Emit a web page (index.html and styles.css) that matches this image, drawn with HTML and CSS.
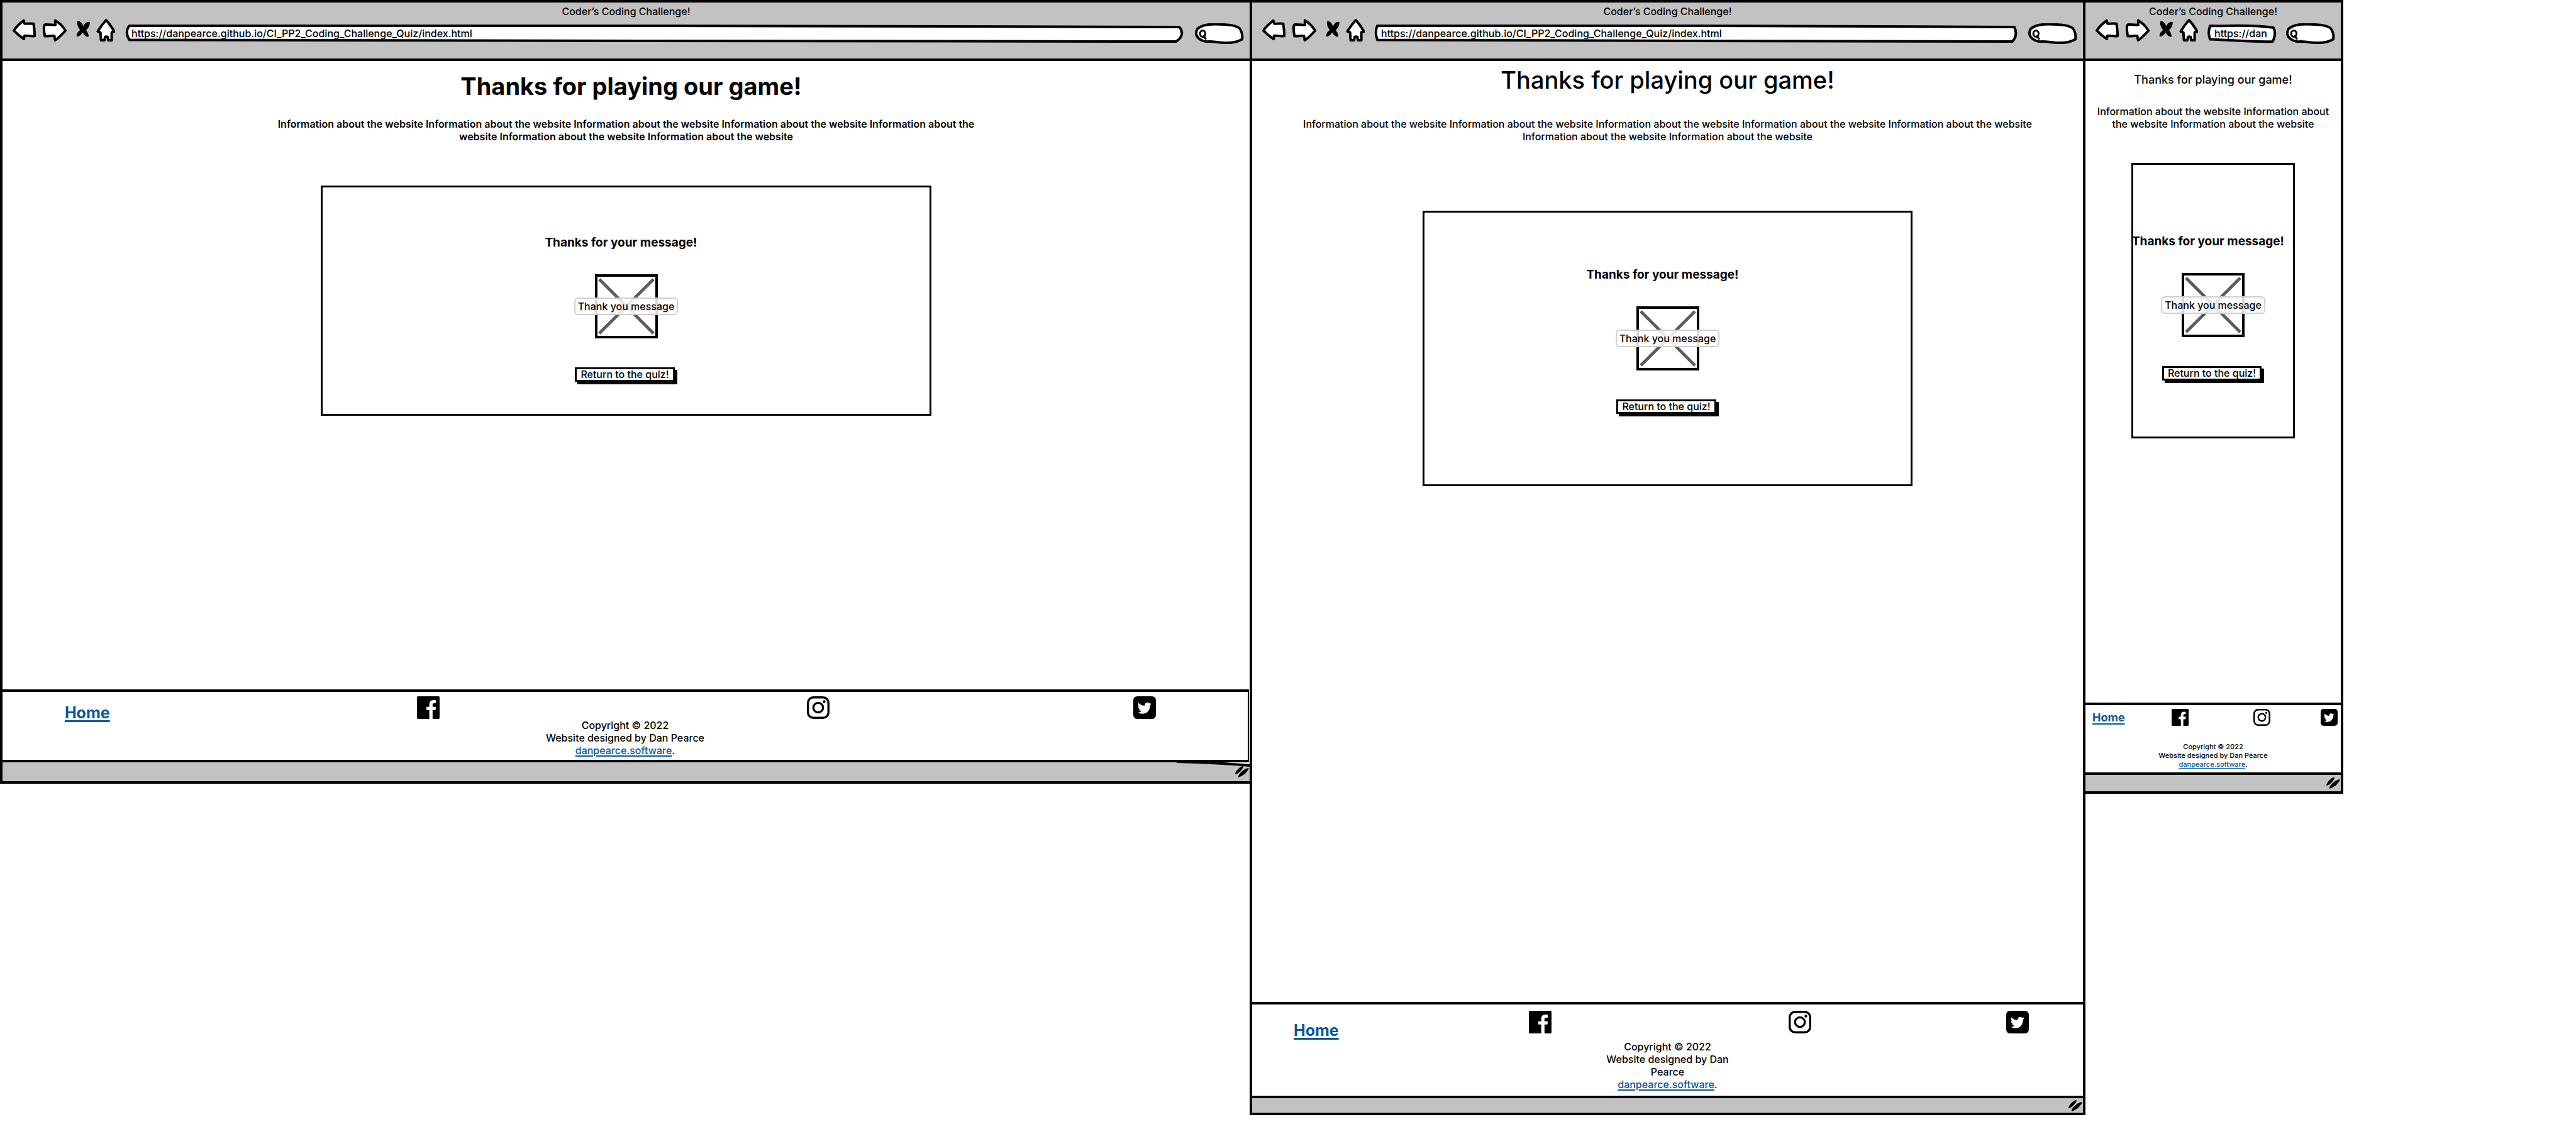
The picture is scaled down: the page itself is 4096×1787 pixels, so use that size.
FILE: index.html
```
<!DOCTYPE html>
<html lang="en">
<head>
<meta charset="utf-8">
<title>Coder's Coding Challenge!</title>
<link rel="stylesheet" href="styles.css">
</head>
<body>
<svg class="defs" width="0" height="0" aria-hidden="true">
  <symbol id="back" viewBox="0 0 38 40"><path class="ink" d="M3 18.7C7 12 13 7 18.700 2.700L20 7.500C25 8 31 7 34.500 7.800C35 14 36.500 21 36 27.300C31 28 25 26.500 20 26.800L19 32C13 28 7 23 3 18.700Z"/></symbol>
  <symbol id="forward" viewBox="0 0 40 40"><path class="ink" d="M20.800 2.500L21 9.600C15 10 10 8.500 5 9C2 10 2.500 17 4.300 27.400C9 28 14 26.500 19.400 27.100L20.600 34C27 30 32 24 37.200 18.700C33 12 27 6 20.800 2.500Z"/></symbol>
  <symbol id="stop" viewBox="0 0 26 40"><path d="M6.200 3.500C11 3 14 7 15.500 12C17.500 7 21 4 25.600 5C26.500 10 23.500 14.500 20 18C22.500 21.500 24.500 25 23.600 28.400C19 29 16.500 25 14.600 21.500C12 25 9 28.500 4.800 28C4.500 23 7.500 20 10.500 17.500C7 13.500 5 9 6.200 3.500Z"/></symbol>
  <symbol id="house" viewBox="0 0 30 40"><path class="ink" d="M15.700 2C11 7 6 14 2.500 19.800L6.700 21.500L7.600 34L13 34L14 28.800Q16 27.500 18.300 28.800L19.200 34L24.600 34L24.600 21.500L29 20.200C25 14 20 6 15.700 2Z"/></symbol>
  <symbol id="grip" viewBox="0 0 22 18"><path d="M11 0C14 0 13 3 10 6C7 10 3 13 0 13C0 9 5 3 11 0ZM21 3C23 4 19 8 16 12C12 15 8 17 5 18C4 13 14 4 21 3Z"/></symbol>
  <symbol id="facebook" viewBox="0 0 42 42"><path d="M2 0H40Q42 0 42 2V40Q42 42 40 42H29V25.500H34.500L35.300 19.500H29V15.500Q29 12.700 31.800 12.700H35V7.300Q33 7 30.800 7Q23 7 22.900 15V19.500H17.500V25.500H22.900V42H2Q0 42 0 40V2Q0 0 2 0Z"/></symbol>
  <symbol id="instagram" viewBox="0 0 42 42"><rect x="2" y="2" width="38" height="38" rx="10" fill="none" stroke="#000" stroke-width="4"/><circle cx="21" cy="21" r="9" fill="none" stroke="#000" stroke-width="3.800"/><circle cx="32" cy="10" r="2.600"/></symbol>
  <symbol id="twitter" viewBox="0 0 42 42"><path fill-rule="evenodd" d="M8 0H34Q42 0 42 8V34Q42 42 34 42H8Q0 42 0 34V8Q0 0 8 0ZM33.500 13.700L30.900 14.400Q32 13.600 32.900 12.100L29.800 13.200Q28.200 11.400 26 11.400Q21 11.800 21 17.500Q14 17 9.800 12.200Q7.500 16 11 19.200L8.700 18.600Q8.800 22.500 12.800 23.900L10.500 24Q11.500 27 15.500 27.600Q12.500 30 8.500 30Q12.500 32.700 16.800 32.500Q30.500 31.500 31.200 16.500Q32.600 15.400 33.500 13.700Z"/></symbol>
  <symbol id="lens" viewBox="0 0 80 34"><path class="ink" d="M3.800 9C12 1 28 1 40 1.800C54 2 66 4 71 8C75 14 76 20 75 25.500C67 30 58 31.500 48 31C38 31 28 28 19 29.200C8 28 1 21 2 15Q2.500 11 3.800 9Z"/><ellipse class="ink glass" cx="12.300" cy="16.500" rx="4.200" ry="5"/><path class="ink glass" d="M14 20.500L17 24.500"/></symbol>
</svg>

<main class="board">
  <article class="window desktop">
    <header class="chrome">
      <p class="caption">Coder’s Coding Challenge!</p>
      <div class="toolbar">
        <div class="buttons">
          <button type="button" aria-label="Back"><svg width="38" height="40"><use href="#back"/></svg></button>
          <button type="button" aria-label="Forward"><svg width="40" height="40"><use href="#forward"/></svg></button>
          <button type="button" aria-label="Stop"><svg width="26" height="40"><use href="#stop"/></svg></button>
          <button type="button" aria-label="Home page"><svg width="30" height="40"><use href="#house"/></svg></button>
        </div>
        <div class="address"><svg viewBox="0 0 100 28" preserveAspectRatio="none" aria-hidden="true"><path class="ink" d="M.4 2C30 1 70 2 99.600 4C100 12 99.900 20 99.300 27C70 27 30 25 .4 24.500C.1 16 .1 8 .4 2Z"/></svg><input type="text" aria-label="Address" value="https://danpearce.github.io/CI_PP2_Coding_Challenge_Quiz/index.html"></div>
        <div class="search"><svg width="80" height="34" aria-hidden="true"><use href="#lens"/></svg><input type="search" aria-label="Search"></div>
      </div>
    </header>
    <section class="page">
      <h1>Thanks for playing our game!</h1>
      <p class="intro">Information about the website Information about the website Information about the website Information about the website Information about the website Information about the website Information about the website</p>
      <div class="card">
        <h2>Thanks for your message!</h2>
        <figure class="picture"><svg viewBox="0 0 94 96" aria-hidden="true"><path d="M3 4L91 92M91 4L3 92"/></svg><figcaption>Thank you message</figcaption></figure>
        <button type="button" class="return">Return to the quiz!</button>
      </div>
    </section>
    <footer class="site-footer">
      <nav class="links">
        <a class="home" href="#home">Home</a>
        <a href="#facebook-page" aria-label="Facebook"><svg class="social"><use href="#facebook"/></svg></a>
        <a href="#instagram-page" aria-label="Instagram"><svg class="social"><use href="#instagram"/></svg></a>
        <a href="#twitter-page" aria-label="Twitter"><svg class="social"><use href="#twitter"/></svg></a>
      </nav>
      <p class="legal">Copyright © 2022<br>Website designed by Dan Pearce<br><a href="#author">danpearce.software</a>.</p>
    </footer>
    <div class="status"><svg class="wedge" width="116" height="8" aria-hidden="true"><path class="gap" d="M40 0H116V5Q80 2 40 0Z"/><path class="edge" d="M0 -1Q70 1 116 5"/></svg><svg class="grip" width="22" height="18" aria-hidden="true"><use href="#grip"/></svg></div>
  </article>

  <article class="window tablet">
    <header class="chrome">
      <p class="caption">Coder’s Coding Challenge!</p>
      <div class="toolbar">
        <div class="buttons">
          <button type="button" aria-label="Back"><svg width="38" height="40"><use href="#back"/></svg></button>
          <button type="button" aria-label="Forward"><svg width="40" height="40"><use href="#forward"/></svg></button>
          <button type="button" aria-label="Stop"><svg width="26" height="40"><use href="#stop"/></svg></button>
          <button type="button" aria-label="Home page"><svg width="30" height="40"><use href="#house"/></svg></button>
        </div>
        <div class="address"><svg viewBox="0 0 100 28" preserveAspectRatio="none" aria-hidden="true"><path class="ink" d="M.4 2C30 1 70 2 99.600 4C100 12 99.900 20 99.300 27C70 27 30 25 .4 24.500C.1 16 .1 8 .4 2Z"/></svg><input type="text" aria-label="Address" value="https://danpearce.github.io/CI_PP2_Coding_Challenge_Quiz/index.html"></div>
        <div class="search"><svg width="80" height="34" aria-hidden="true"><use href="#lens"/></svg><input type="search" aria-label="Search"></div>
      </div>
    </header>
    <section class="page">
      <h1>Thanks for playing our game!</h1>
      <p class="intro">Information about the website Information about the website Information about the website Information about the website Information about the website Information about the website Information about the website</p>
      <div class="card">
        <h2>Thanks for your message!</h2>
        <figure class="picture"><svg viewBox="0 0 94 96" aria-hidden="true"><path d="M3 4L91 92M91 4L3 92"/></svg><figcaption>Thank you message</figcaption></figure>
        <button type="button" class="return">Return to the quiz!</button>
      </div>
    </section>
    <footer class="site-footer">
      <nav class="links">
        <a class="home" href="#home">Home</a>
        <a href="#facebook-page" aria-label="Facebook"><svg class="social"><use href="#facebook"/></svg></a>
        <a href="#instagram-page" aria-label="Instagram"><svg class="social"><use href="#instagram"/></svg></a>
        <a href="#twitter-page" aria-label="Twitter"><svg class="social"><use href="#twitter"/></svg></a>
      </nav>
      <p class="legal">Copyright © 2022<br>Website designed by Dan Pearce<br><a href="#author">danpearce.software</a>.</p>
    </footer>
    <div class="status"><svg class="grip" width="22" height="18" aria-hidden="true"><use href="#grip"/></svg></div>
  </article>

  <article class="window phone">
    <header class="chrome">
      <p class="caption">Coder’s Coding Challenge!</p>
      <div class="toolbar">
        <div class="buttons">
          <button type="button" aria-label="Back"><svg width="38" height="40"><use href="#back"/></svg></button>
          <button type="button" aria-label="Forward"><svg width="40" height="40"><use href="#forward"/></svg></button>
          <button type="button" aria-label="Stop"><svg width="26" height="40"><use href="#stop"/></svg></button>
          <button type="button" aria-label="Home page"><svg width="30" height="40"><use href="#house"/></svg></button>
        </div>
        <div class="address"><svg viewBox="0 0 100 28" preserveAspectRatio="none" aria-hidden="true"><path class="ink" d="M3 2C30 3 60 -1 98 5C102 12 100 20 97 27C70 28 40 25 3 23.500C0 16 1 8 3 2Z"/></svg><input type="text" aria-label="Address" value="https://dan"></div>
        <div class="search"><svg width="80" height="34" aria-hidden="true"><use href="#lens"/></svg><input type="search" aria-label="Search"></div>
      </div>
    </header>
    <section class="page">
      <h1>Thanks for playing our game!</h1>
      <p class="intro">Information about the website Information about the website Information about the website</p>
      <div class="card">
        <h2>Thanks for your message!</h2>
        <figure class="picture"><svg viewBox="0 0 94 96" aria-hidden="true"><path d="M3 4L91 92M91 4L3 92"/></svg><figcaption>Thank you message</figcaption></figure>
        <button type="button" class="return">Return to the quiz!</button>
      </div>
    </section>
    <footer class="site-footer">
      <nav class="links">
        <a class="home" href="#home">Home</a>
        <a href="#facebook-page" aria-label="Facebook"><svg class="social"><use href="#facebook"/></svg></a>
        <a href="#instagram-page" aria-label="Instagram"><svg class="social"><use href="#instagram"/></svg></a>
        <a href="#twitter-page" aria-label="Twitter"><svg class="social"><use href="#twitter"/></svg></a>
      </nav>
      <p class="legal">Copyright © 2022<br>Website designed by Dan Pearce<br><a href="#author">danpearce.software</a>.</p>
    </footer>
    <div class="status"><svg class="grip" width="22" height="18" aria-hidden="true"><use href="#grip"/></svg></div>
  </article>
</main>
</body>
</html>
```
FILE: styles.css
```
* {
  box-sizing: border-box;
}

body {
  margin: 0;
  background: #fff;
  color: #000;
  font-family: Inter, sans-serif;
  font-size: 16px;
  font-weight: 500;
  line-height: 20px;
}

h1, h2, p, figure {
  margin: 0;
}

a {
  color: #0a5699;
}

svg {
  display: block;
}

.defs {
  position: absolute;
}

.ink {
  fill: #fff;
  stroke: #000;
  stroke-width: 4px;
  stroke-linejoin: round;
  vector-effect: non-scaling-stroke;
}

.glass {
  stroke-width: 3px;
  stroke-linecap: round;
}

/* Board: three browser windows side by side, spare room on the right */
.board {
  display: grid;
  grid-template-columns: 1991fr 1325fr 410fr 370fr;
  align-items: start;
}

.window {
  display: flex;
  flex-direction: column;
  border: 4px solid #000;
}

.window + .window {
  margin-left: -4px;
}

.desktop {
  min-height: 1246px;
}

.tablet {
  min-height: 1773px;
}

.phone {
  min-height: 1262px;
}

/* Browser bar */
.chrome {
  padding: 4px 0 22px;
  border-bottom: 4px solid #000;
  background: #c2c2c2;
}

.caption {
  text-align: center;
}

.toolbar {
  display: flex;
  align-items: flex-start;
  gap: 16px;
  padding: 2px 7px 0 15px;
}

.buttons {
  display: flex;
  gap: 10px;
}

.buttons button {
  padding: 0;
  border: 0;
  background: none;
}

.address,
.search {
  position: relative;
}

.address {
  flex: 1;
  min-width: 0;
  height: 28px;
  margin-top: 9px;
}

.address svg,
.search svg {
  position: absolute;
  inset: 0;
  overflow: visible;
}

.address svg {
  width: 100%;
  height: 100%;
}

.address input,
.search input {
  position: relative;
  display: block;
  width: 100%;
  height: 100%;
  padding: 0 4px 0 10px;
  border: 0;
  outline: 0;
  background: none;
  color: inherit;
  font: inherit;
}

.search {
  width: 80px;
  height: 34px;
  margin: 7px 0 0 2px;
}

.search input {
  padding-left: 22px;
}

/* Page */
.page {
  display: flex;
  flex: 1;
  flex-direction: column;
  align-items: center;
  text-align: center;
}

h1 {
  font-size: 38px;
  font-weight: 500;
  line-height: 48px;
}

.desktop .page {
  padding-top: 16px;
}

.desktop h1 {
  margin-bottom: 26px;
  padding-left: 16px;
  font-weight: 700;
}

.desktop .intro {
  width: 58%;
  margin-bottom: 68px;
  font-weight: 600;
}

.tablet .page {
  padding-top: 6px;
}

.tablet h1 {
  margin-bottom: 36px;
}

.tablet .intro {
  width: 90%;
  margin-bottom: 108px;
}

.phone .page {
  padding-top: 20px;
}

.phone h1 {
  margin-bottom: 30px;
  font-size: 18px;
  line-height: 20px;
}

.phone .intro {
  width: 94%;
  margin-bottom: 52px;
}

.card {
  display: flex;
  flex-direction: column;
  align-items: center;
  border: 3px solid #000;
}

.desktop .card {
  width: 49%;
  padding: 76px 0 47px;
}

.tablet .card {
  width: 59%;
  padding: 87px 0 108px;
}

.phone .card {
  width: 64%;
  padding: 110px 0 85px;
}

h2 {
  margin-bottom: 38px;
  padding-right: 16px;
  font-size: 19px;
  line-height: 24px;
  white-space: nowrap;
}

.picture {
  position: relative;
  width: 100px;
  height: 102px;
  margin-bottom: 46px;
  border: 4px solid #000;
}

.picture svg {
  width: 100%;
  height: 100%;
  fill: none;
  stroke: #5c5c5c;
  stroke-width: 5px;
}

.picture figcaption {
  position: absolute;
  top: 50%;
  left: 50%;
  transform: translate(-50%, -50%);
  padding: 2px 4px;
  border: 2px solid #cfcfcf;
  border-radius: 6px;
  background: rgba(255, 255, 255, 0.85);
  white-space: nowrap;
}

.return {
  height: 23px;
  margin: 0 4px 4px 0;
  padding: 0 6px;
  border: 3px solid #000;
  background: #fff;
  box-shadow: 4px 4px 0 #000;
  color: #000;
  font: inherit;
  line-height: 17px;
}

/* Footer */
.site-footer {
  border: solid #000;
  border-width: 4px 0;
  background: #fff;
}

.desktop .site-footer {
  margin-right: 1px;
  padding: 7px 0 5px;
  border-right-width: 2px;
}

.tablet .site-footer {
  padding: 10px 0 8px;
}

.phone .site-footer {
  padding: 6px 0;
}

.links {
  display: grid;
  grid-template-columns: 333fr 313fr 262fr 92fr;
}

.home {
  align-self: end;
  padding-left: 15%;
  font-size: 25px;
  font-weight: 700;
  text-decoration-thickness: 3px;
  text-underline-offset: 3px;
}

.social {
  width: 36px;
  height: 36px;
}

.tablet .links {
  min-height: 41px;
  margin-bottom: 6px;
}

.phone .links {
  grid-template-columns: 338fr 319fr 265fr 78fr;
  margin-bottom: 26px;
}

.phone .home {
  align-self: center;
  padding-left: 8%;
  font-size: 18px;
  text-decoration-thickness: 2px;
}

.phone .social {
  width: 27px;
  height: 27px;
}

.legal {
  width: 16%;
  margin: 0 auto;
  text-align: center;
}

.legal a {
  text-decoration-thickness: 2px;
  text-underline-offset: 2px;
}

.phone .legal {
  width: 60%;
  font-size: 11px;
  line-height: 14px;
}

.phone .legal a {
  text-decoration-thickness: 1px;
}

/* Status bar */
.status {
  position: relative;
  display: flex;
  justify-content: flex-end;
  align-items: center;
  height: 26px;
  padding-right: 1px;
  background: #c2c2c2;
}

.desktop .status {
  height: 30px;
}

.tablet .status {
  height: 23px;
}

.wedge {
  position: absolute;
  top: 0;
  right: 0;
  overflow: visible;
}

.gap {
  fill: #fff;
}

.edge {
  fill: none;
  stroke: #000;
  stroke-width: 4px;
}
```
